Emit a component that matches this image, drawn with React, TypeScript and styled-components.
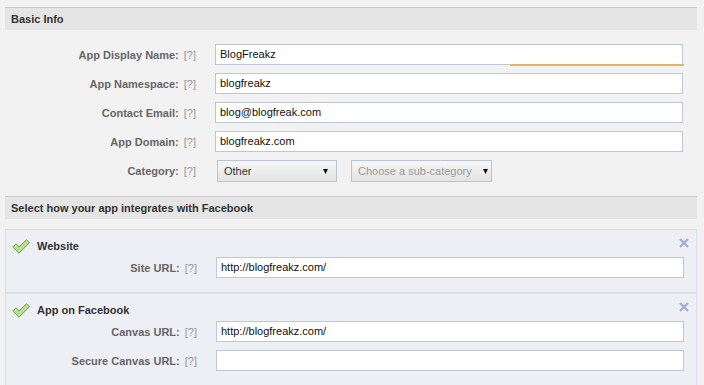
import React from "react";
import styled, { createGlobalStyle } from "styled-components";

const Global = createGlobalStyle`
  html, body { margin: 0; padding: 0; background: #f2f2f2; overflow: hidden; }
  body { font-family: "Liberation Sans", Arial, sans-serif; font-size: 11px; }
`;

const Page = styled.div`
  width: 692px;
  padding: 7px 0 0 5px;
`;

const SectionHeader = styled.div`
  border-top: 1px solid #cccccc;
  background: #e5e5e5;
  height: 22px;
  line-height: 22px;
  padding-left: 6px;
  font-weight: bold;
  color: #333333;
`;

const Form = styled.div`
  display: flex;
  flex-direction: column;
  gap: 8px;
  padding: 14px 0;
`;

const Row = styled.div`
  display: flex;
  align-items: center;
`;

const LabelCell = styled.div`
  width: 191px;
  text-align: right;
  color: #666666;
  font-weight: bold;
  white-space: nowrap;
`;

const Help = styled.span`
  color: #999999;
  font-weight: normal;
  margin-left: 5px;
`;

const Field = styled.div`
  position: relative;
  margin-left: 19px;
  width: 468px;
  height: 21px;
  box-sizing: border-box;
  border: 1px solid #bdc7d8;
  background: #ffffff;
  padding: 0 4px;
  line-height: 19px;
  color: #111111;
  white-space: nowrap;
`;

const Underline = styled.div`
  position: absolute;
  right: -2px;
  bottom: -2px;
  width: 174px;
  height: 2px;
  background: #e2b466;
`;

const SelectGroup = styled.div`
  display: flex;
  gap: 14px;
  margin-left: 21px;
`;

const Select = styled.div<{ $width: number; $muted?: boolean; $arrowPad: number }>`
  width: ${(p) => p.$width}px;
  height: 22px;
  box-sizing: border-box;
  border: 1px solid #bac4d6;
  background: linear-gradient(#f7f7f7, #e3e3e3);
  display: flex;
  align-items: center;
  justify-content: space-between;
  padding: 0 ${(p) => p.$arrowPad}px 0 6px;
  color: ${(p) => (p.$muted ? "#999999" : "#333333")};
`;

const Panels = styled.div`
  padding-top: 10px;
`;

const Panel = styled.div`
  position: relative;
  background: #edeff4;
  border: 1px solid #d8dfea;
  padding: 7px 0 14px;
`;

const PanelTitle = styled.div`
  display: flex;
  align-items: center;
  gap: 7px;
  height: 18px;
  padding-left: 6px;
  margin-bottom: 2px;
  font-weight: bold;
  color: #333333;
`;

const PanelFields = styled.div`
  display: flex;
  flex-direction: column;
  gap: 8px;
`;

const Close = styled.div`
  position: absolute;
  top: 8px;
  right: 7px;
  width: 10px;
  height: 10px;
  display: flex;
`;

const Arrow = () => (
  <svg width="5" height="5" viewBox="0 0 5 5">
    <polygon points="0,0 5,0 2.5,5" fill="#111" />
  </svg>
);

const Check = () => (
  <svg width="18" height="15" viewBox="0 0 18 15">
    <polygon
      points="0.8,8 4,4.8 7,8 14.5,0.8 17.4,3.8 7,14.2"
      fill="#b9df92"
      stroke="#6aa444"
      strokeWidth="1"
      strokeLinejoin="round"
    />
  </svg>
);

const CloseIcon = () => (
  <svg width="10" height="10" viewBox="0 0 10 10">
    <path d="M1 1 L9 9 M9 1 L1 9" stroke="#9fafcb" strokeWidth="2.2" />
  </svg>
);

const FieldRow = ({ label, value, underline }: { label: string; value: string; underline?: boolean }) => (
  <Row>
    <LabelCell>
      {label}
      <Help>[?]</Help>
    </LabelCell>
    <Field>
      {value}
      {underline && <Underline />}
    </Field>
  </Row>
);

export default function App() {
  return (
    <>
      <Global />
      <Page>
        <SectionHeader>Basic Info</SectionHeader>
        <Form>
          <FieldRow label="App Display Name:" value="BlogFreakz" underline />
          <FieldRow label="App Namespace:" value="blogfreakz" />
          <FieldRow label="Contact Email:" value="blog@blogfreak.com" />
          <FieldRow label="App Domain:" value="blogfreakz.com" />
          <Row>
            <LabelCell>
              Category:
              <Help>[?]</Help>
            </LabelCell>
            <SelectGroup>
              <Select $width={120} $arrowPad={8}>
                Other
                <Arrow />
              </Select>
              <Select $width={141} $muted $arrowPad={3}>
                Choose a sub-category
                <Arrow />
              </Select>
            </SelectGroup>
          </Row>
        </Form>
        <SectionHeader>Select how your app integrates with Facebook</SectionHeader>
        <Panels>
          <Panel>
            <PanelTitle>
              <Check />
              Website
            </PanelTitle>
            <Close>
              <CloseIcon />
            </Close>
            <PanelFields>
              <FieldRow label="Site URL:" value="http://blogfreakz.com/" />
            </PanelFields>
          </Panel>
          <Panel>
            <PanelTitle>
              <Check />
              App on Facebook
            </PanelTitle>
            <Close>
              <CloseIcon />
            </Close>
            <PanelFields>
              <FieldRow label="Canvas URL:" value="http://blogfreakz.com/" />
              <FieldRow label="Secure Canvas URL:" value="" />
            </PanelFields>
          </Panel>
        </Panels>
      </Page>
    </>
  );
}
